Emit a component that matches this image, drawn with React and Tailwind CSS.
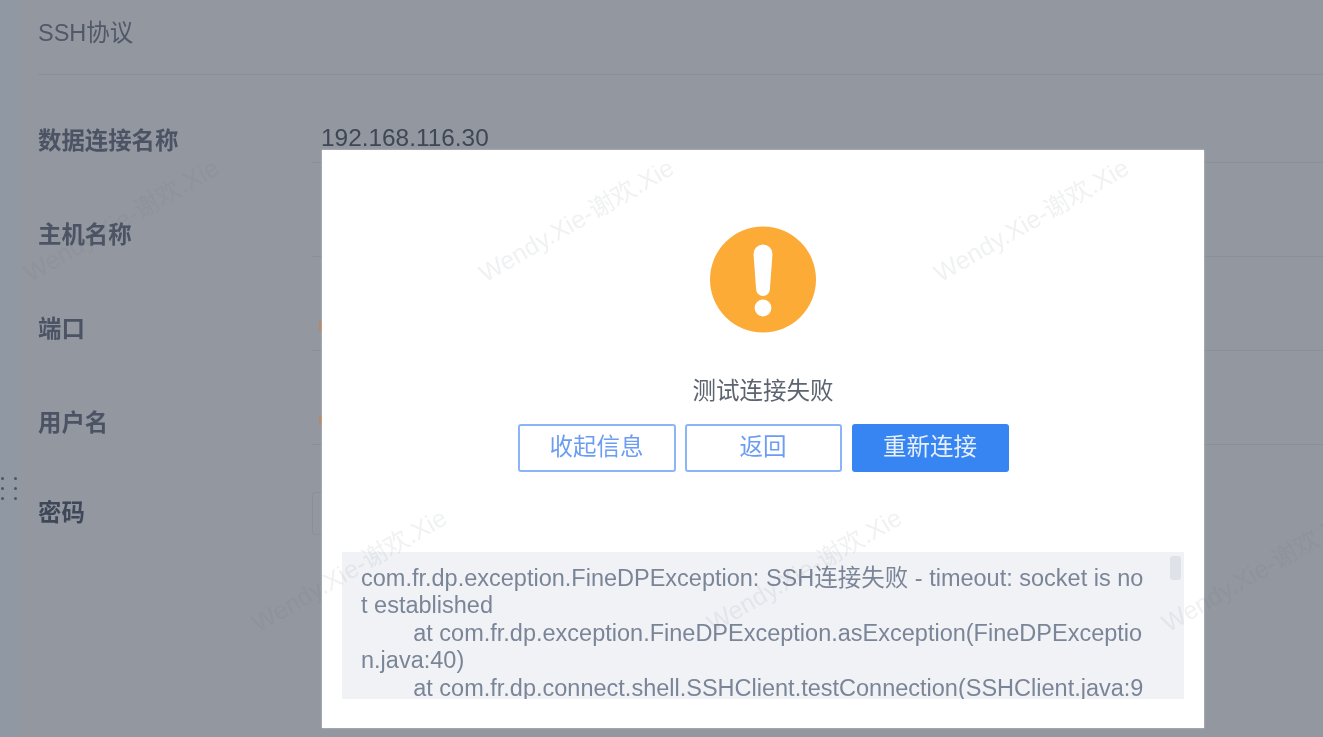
const font = { fontFamily: '"Liberation Sans", "Noto Sans CJK SC", sans-serif' };

const rows = [
  { label: '数据连接名称', value: '192.168.116.30' },
  { label: '主机名称' },
  { label: '端口', mark: true },
  { label: '用户名', mark: true },
];

const watermarks = [
  'top-[208px] left-[1px]',
  'top-[208px] left-[456px]',
  'top-[208px] left-[911px]',
  'top-[558px] left-[229px]',
  'top-[558px] left-[684px]',
  'top-[558px] left-[1139px]',
];

const logText = `com.fr.dp.exception.FineDPException: SSH连接失败 - timeout: socket is not established
\tat com.fr.dp.exception.FineDPException.asException(FineDPException.java:40)
\tat com.fr.dp.connect.shell.SSHClient.testConnection(SSHClient.java:96)
\tat com.fr.dp.connect.shell.SSHClient.connect(SSHClient.java:112)`;

const FormRow = ({ label, value, mark }) => (
  <div className="mb-[47px] flex h-[47px] items-center">
    <div className="w-[274px] pt-[4px] text-[23.4px] font-bold text-[#4b5364]">{label}</div>
    <div className="flex h-[47px] flex-1 items-center border-b border-[#8a909b] pb-[2px] pl-[9px] text-[24.4px] text-[#3f4654]">
      {value}
      {mark && <span className="-ml-[2px] h-[10px] w-[4px] bg-[#b08a6a]" />}
    </div>
  </div>
);

const App = () => {
  return (
    <div className="relative flex h-[737px] w-[1323px] overflow-hidden bg-[#93979f] blur-[0.5px]" style={font}>
      {/* left rail */}
      <div className="relative w-[18px] bg-[#8f98a3]">
        <div className="absolute left-[1px] top-[477px] grid grid-cols-2 gap-x-[10px] gap-y-[7px]">
          {[0, 1, 2, 3, 4, 5].map((i) => (
            <span key={i} className="h-[3px] w-[3px] rounded-full bg-[#4d5564]" />
          ))}
        </div>
      </div>

      {/* page behind the mask */}
      <div className="flex-1 pl-[20px]">
        <div className="flex h-[75px] items-center border-b border-[#8a909b] pb-[6px] text-[23.5px] text-[#515968]">
          SSH协议
        </div>
        <div className="pt-[41px]">
          {rows.map((row) => (
            <FormRow key={row.label} {...row} />
          ))}
          <div className="flex h-[43px] items-center">
            <div className="w-[274px] text-[23.4px] font-bold text-[#3f4859]">密码</div>
            <div className="h-[43px] w-[30px] rounded-[3px] border border-[#8a909b]" />
          </div>
        </div>
      </div>

      {/* dialog */}
      <div className="absolute left-[322px] top-[150px] flex h-[578px] w-[882px] flex-col items-center bg-white shadow-[0_0_2px_#c5c9d0]">
        <svg className="mt-[76px]" width="107" height="107" viewBox="0 0 107 107">
          <circle cx="53" cy="53.5" r="53" fill="#fcab36" />
          <path d="M43.5 28a9.5 9.5 0 0 1 19 0l-2.6 35a6.9 6.9 0 0 1-13.8 0z" fill="#fff" />
          <circle cx="53" cy="82" r="8.4" fill="#fff" />
        </svg>
        <div className="mt-[41px] text-[23.5px] leading-[34px] text-[#5c6470]">测试连接失败</div>
        <div className="mt-[16px] flex gap-[9px]">
          <button className="h-[48px] w-[158px] rounded-[3px] border-2 border-[#8ab5f6] bg-white text-[23.5px] text-[#6c9df2]">
            收起信息
          </button>
          <button className="h-[48px] w-[157px] rounded-[3px] border-2 border-[#8ab5f6] bg-white text-[23.5px] text-[#6c9df2]">
            返回
          </button>
          <button className="ml-[1px] h-[48px] w-[157px] rounded-[3px] bg-[#3685f2] text-[23.5px] text-[#e6effc]">
            重新连接
          </button>
        </div>
        <div className="relative mt-[80px] h-[147px] w-[842px] overflow-hidden bg-[#f0f2f6] pl-[19px] pr-[39px] pt-[13px]">
          <div className="absolute right-[3px] top-[4px] h-[24px] w-[11px] rounded-[3px] bg-[#dfe2e8]" />
          <pre
            className="whitespace-pre-wrap break-all text-[23.5px] leading-[27.4px] text-[#7b8598] [tab-size:8]"
            style={font}
          >
            {logText}
          </pre>
        </div>
      </div>

      {/* watermark */}
      <div className="pointer-events-none absolute inset-0">
        {watermarks.map((pos) => (
          <div
            key={pos}
            className={`absolute ${pos} w-[240px] -rotate-[30deg] whitespace-nowrap text-center text-[25px] leading-[24px] text-[#6b7280]/10`}
          >
            Wendy.Xie-谢欢.Xie
          </div>
        ))}
      </div>
    </div>
  );
};

export default App;
